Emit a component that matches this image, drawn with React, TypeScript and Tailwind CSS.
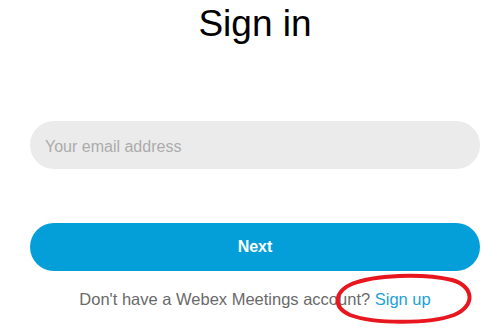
import React from 'react';

// Sign-in screen with a hand-drawn red circle around the sign-up link
export default function App() {
  return (
    <div
      className="relative w-[503px] h-[336px] bg-white overflow-hidden"
      style={{ fontFamily: '"Liberation Sans", Arial, sans-serif' }}
    >
      <div className="flex flex-col items-center pl-[30px] pr-[23px]">
        {/* Title */}
        <h1 className="mt-[2px] text-[37px] leading-[44px] text-black">Sign in</h1>

        {/* Email field */}
        <input
          type="email"
          placeholder="Your email address"
          className="mt-[75px] w-full h-[48px] rounded-full bg-[#ebebeb] px-[15px] pt-[3px] text-[16px] text-gray-800 placeholder:text-[#ababab] outline-none"
        />

        {/* Next button */}
        <button className="mt-[54px] w-full h-[48px] rounded-full bg-[#049fd9] text-white text-[16px] font-bold">
          Next
        </button>

        {/* Sign up */}
        <p className="mt-[18px] text-[16.5px] leading-[20px] text-[#6a6a6a]">
          Don't have a Webex Meetings account? <a className="text-[#1da1d8] cursor-pointer">Sign up</a>
        </p>
      </div>

      {/* Red annotation */}
      <svg className="absolute left-0 top-0 pointer-events-none" width="503" height="336">
        <path
          d="M352 284 C 374 275, 422 273, 452 280 C 474 286, 476 306, 454 315 C 430 324, 374 324, 350 315 C 332 307, 334 291, 354 283"
          fill="none"
          stroke="#e8161e"
          strokeWidth="4"
          strokeLinecap="round"
        />
      </svg>
    </div>
  );
}
